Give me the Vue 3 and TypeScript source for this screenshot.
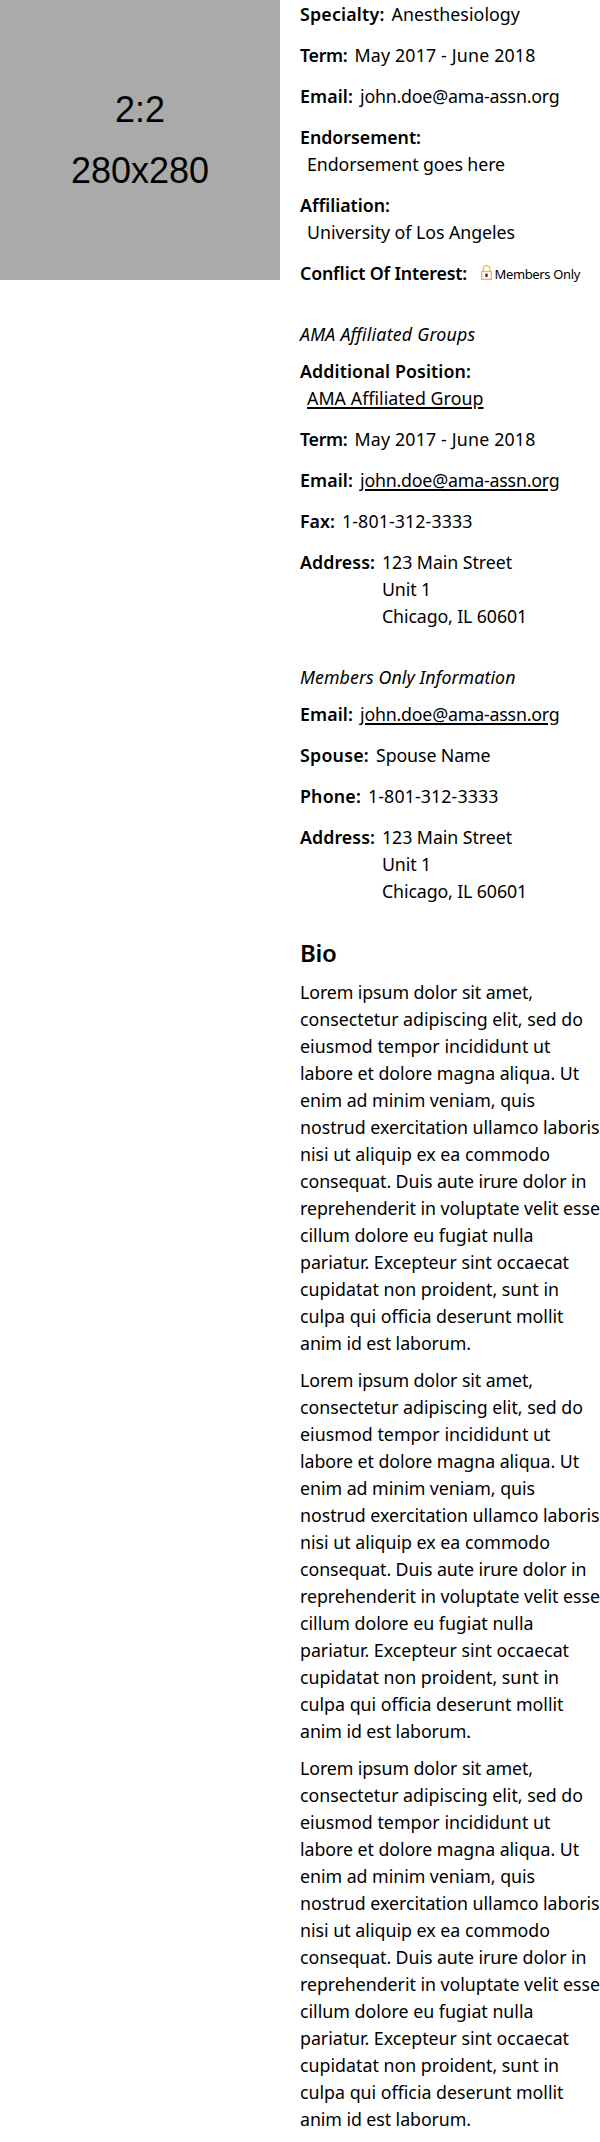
<script setup lang="ts">
import type { Directive } from 'vue'

interface Run {
  text: string
  width: number
}

interface Field {
  label: Run
  lines: Run[]
  layout?: 'inline' | 'stacked' | 'locked'
  link?: boolean
}

interface Group {
  title?: Run
  fields: Field[]
}

const run = (text: string, width: number): Run => ({ text, width })

// Tracks a run of text so that its advance equals the given width in pixels.
const vFit: Directive<HTMLElement, number> = {
  mounted(el, binding) {
    const count = (el.textContent ?? '').length
    let spacing = 0
    for (let pass = 0; pass < 3; pass++) {
      spacing += (binding.value - el.getBoundingClientRect().width) / count
      el.style.letterSpacing = `${spacing.toFixed(4)}px`
    }
  },
}

const term: Field = { label: run('Term:', 47.5), lines: [run('May 2017 - June 2018', 181)] }
const email: Field = { label: run('Email:', 53), lines: [run('john.doe@ama-assn.org', 199.5)] }
const address: Field = {
  label: run('Address:', 75),
  lines: [run('123 Main Street', 130), run('Unit 1', 49), run('Chicago, IL 60601', 145)],
}

const groups: Group[] = [
  {
    fields: [
      { label: run('Specialty:', 84.5), lines: [run('Anesthesiology', 128.5)] },
      term,
      email,
      { label: run('Endorsement:', 121), lines: [run('Endorsement goes here', 198)], layout: 'stacked' },
      { label: run('Affiliation:', 90), lines: [run('University of Los Angeles', 208)], layout: 'stacked' },
      { label: run('Conflict Of Interest:', 167), lines: [run('Members Only', 85.5)], layout: 'locked' },
    ],
  },
  {
    title: run('AMA Affiliated Groups', 175.5),
    fields: [
      {
        label: run('Additional Position:', 171),
        lines: [run('AMA Affiliated Group', 176.5)],
        layout: 'stacked',
        link: true,
      },
      term,
      { ...email, link: true },
      { label: run('Fax:', 35), lines: [run('1-801-312-3333', 130.5)] },
      address,
    ],
  },
  {
    title: run('Members Only Information', 215.5),
    fields: [
      { ...email, link: true },
      { label: run('Spouse:', 69), lines: [run('Spouse Name', 114.5)] },
      { label: run('Phone:', 61), lines: [run('1-801-312-3333', 130.5)] },
      address,
    ],
  },
]

const bioLines: Run[] = [
  run('Lorem ipsum dolor sit amet,', 233),
  run('consectetur adipiscing elit, sed do', 283),
  run('eiusmod tempor incididunt ut', 250.5),
  run('labore et dolore magna aliqua. Ut', 279),
  run('enim ad minim veniam, quis', 235),
  run('nostrud exercitation ullamco laboris', 299.5),
  run('nisi ut aliquip ex ea commodo', 250),
  run('consequat. Duis aute irure dolor in', 286.5),
  run('reprehenderit in voluptate velit esse', 300),
  run('cillum dolore eu fugiat nulla', 233.5),
  run('pariatur. Excepteur sint occaecat', 269),
  run('cupidatat non proident, sunt in', 259),
  run('culpa qui officia deserunt mollit', 263.5),
  run('anim id est laborum.', 171),
]
</script>

<template>
  <main class="profile">
    <div class="photo">
      <span>2:2</span>
      <span>280x280</span>
    </div>
    <div class="details">
      <section v-for="(group, g) in groups" :key="g" class="group">
        <h3 v-if="group.title" class="group-title">
          <span v-fit="group.title.width" class="run">{{ group.title.text }}</span>
        </h3>
        <div v-for="(field, f) in group.fields" :key="f" class="field" :class="field.layout">
          <div class="label"><span v-fit="field.label.width" class="run">{{ field.label.text }}</span></div>
          <svg v-if="field.layout === 'locked'" class="lock" viewBox="0 0 11 15" width="11" height="15">
            <path d="M2.3 6.5V3.6Q2.3 .7 5.5 .7T8.7 3.6V6.5" fill="none" stroke="#fbb040" stroke-width="1.2" />
            <rect x=".7" y="6.5" width="9.6" height="7.8" fill="#fff" stroke="#fbb040" stroke-width="1.3" />
            <rect x="4.3" y="8.6" width="2.4" height="3.3" fill="#46166b" />
          </svg>
          <div class="value">
            <div v-for="(line, l) in field.lines" :key="l" class="line">
              <a v-if="field.link" v-fit="line.width" class="run link">{{ line.text }}</a>
              <span v-else v-fit="line.width" class="run">{{ line.text }}</span>
            </div>
          </div>
        </div>
      </section>
      <section class="bio">
        <h2 class="bio-title"><span v-fit="36.5" class="run">Bio</span></h2>
        <p v-for="n in 3" :key="n" class="paragraph">
          <span v-for="(line, l) in bioLines" :key="l" class="line">
            <span v-fit="line.width" class="run">{{ line.text }}</span>
          </span>
        </p>
      </section>
    </div>
  </main>
</template>

<style>
body {
  background: #fff;
}
</style>

<style scoped>
.profile {
  display: grid;
  grid-template-columns: 280px 300px;
  column-gap: 20px;
  align-items: start;
  height: 2142px;
  overflow: hidden;
  color: #000;
  font-family: 'Noto Sans', 'Open Sans', sans-serif;
  font-size: 17.8px;
  line-height: 27px;
}
.photo {
  box-sizing: border-box;
  display: flex;
  flex-direction: column;
  align-items: center;
  height: 280px;
  padding-top: 79px;
  background: #aaa;
  font: 36px/61px 'Liberation Sans', Arial, sans-serif;
}
.details {
  padding-top: 1px;
}
.group {
  margin-bottom: 34px;
}
.run {
  display: inline-block;
  white-space: pre;
  font-feature-settings: 'liga' 1;
}
.group-title {
  margin: 0 0 10px;
  font-size: inherit;
  font-weight: 400;
  font-style: italic;
}
.field {
  display: flex;
  margin-bottom: 14px;
}
.field:last-child {
  margin-bottom: 0;
}
.field.stacked {
  flex-direction: column;
}
.label {
  font-weight: 600;
}
.value {
  margin-left: 7px;
}
.line {
  display: block;
  height: 27px;
}
.link {
  text-decoration: underline;
  text-decoration-thickness: 1.5px;
  text-underline-offset: 2px;
}
.lock {
  margin: 5px 3px 0 13.5px;
}
.locked .value {
  margin: 1px 0 -1px;
  font-size: 13px;
}
.bio-title {
  margin: 0 0 10px;
  padding-bottom: 3px;
  font-size: 24px;
  font-weight: 600;
  line-height: 27px;
}
.paragraph {
  margin: 0 0 10px;
}
</style>
